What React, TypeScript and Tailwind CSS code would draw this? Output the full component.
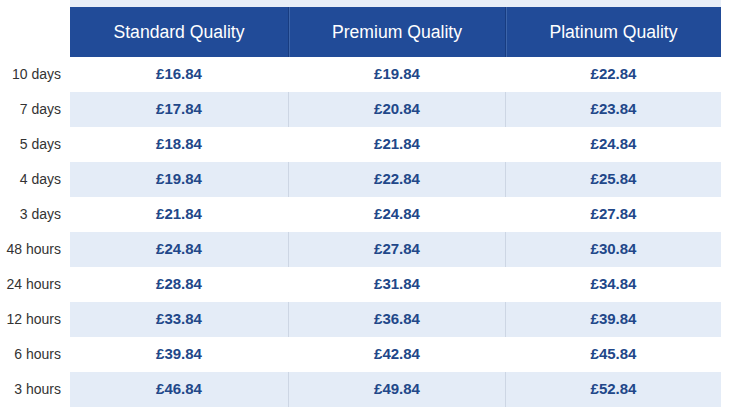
const columns = ["Standard Quality", "Premium Quality", "Platinum Quality"];

const rows: [string, string, string, string][] = [
  ["10 days", "£16.84", "£19.84", "£22.84"],
  ["7 days", "£17.84", "£20.84", "£23.84"],
  ["5 days", "£18.84", "£21.84", "£24.84"],
  ["4 days", "£19.84", "£22.84", "£25.84"],
  ["3 days", "£21.84", "£24.84", "£27.84"],
  ["48 hours", "£24.84", "£27.84", "£30.84"],
  ["24 hours", "£28.84", "£31.84", "£34.84"],
  ["12 hours", "£33.84", "£36.84", "£39.84"],
  ["6 hours", "£39.84", "£42.84", "£45.84"],
  ["3 hours", "£46.84", "£49.84", "£52.84"],
];

export default function App() {
  return (
    <div className="h-[416px] w-[734px] bg-white font-['Liberation_Sans',Arial,sans-serif]">
      <div className="ml-[70px] h-[7px] w-[651px] bg-[#e8eef7]" />
      <div className="grid grid-cols-[70px_218px_217px_216px]">
        <div className="bg-white" />
        {columns.map((c, i) => (
          <div
            key={c}
            className={`flex h-[50px] items-center justify-center bg-[#214b98] text-[17.6px] text-white ${
              i > 0 ? "border-l border-[#183c80] shadow-[inset_1px_0_0_#3d65aa]" : ""
            }`}
          >
            {c}
          </div>
        ))}
        {rows.map((r, ri) => {
          const striped = ri % 2 === 1;
          return [
            <div
              key={r[0]}
              className="flex h-[35px] items-center justify-end pr-[9px] text-[14px] text-[#333333]"
            >
              {r[0]}
            </div>,
            ...r.slice(1).map((price, ci) => (
              <div
                key={r[0] + ci}
                className={`flex h-[35px] items-center justify-center text-[15px] font-bold text-[#214789] ${
                  striped ? "bg-[#e4ecf7]" : "bg-white"
                } ${ci > 0 ? (striped ? "border-l border-[#cdd6e4]" : "border-l border-white") : ""}`}
              >
                {price}
              </div>
            )),
          ];
        })}
      </div>
    </div>
  );
}
